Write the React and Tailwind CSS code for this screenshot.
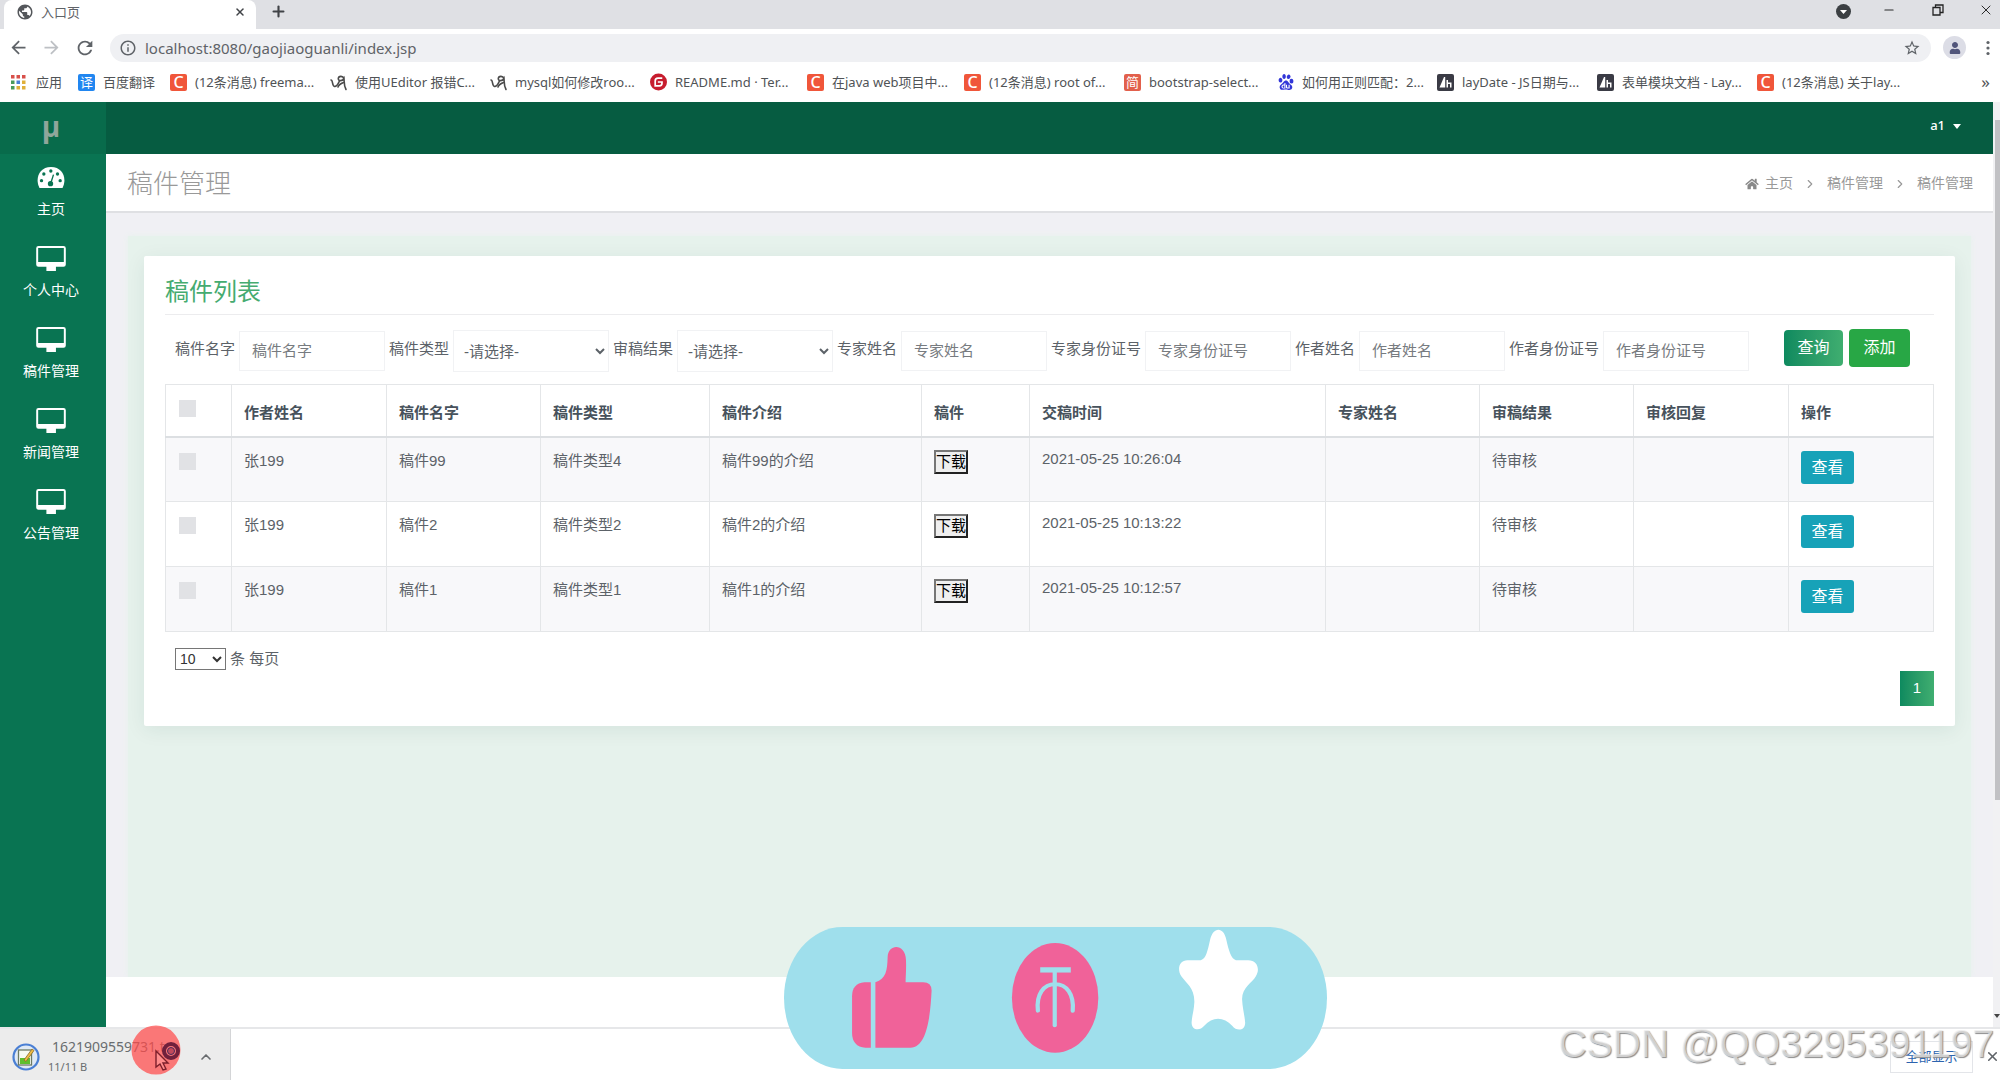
import React from "react";
import { FaHome, FaUser } from "react-icons/fa";
import { SiBaidu } from "react-icons/si";
import { MdArrowBack, MdArrowForward, MdRefresh, MdInfoOutline, MdStarBorder, MdPublic } from "react-icons/md";
import { X, Plus, Minus, ChevronUp, ChevronRight } from "lucide-react";

const columns = [
  { name: "作者姓名", width: "w-[155px]" },
  { name: "稿件名字", width: "w-[154px]" },
  { name: "稿件类型", width: "w-[169px]" },
  { name: "稿件介绍", width: "w-[212px]" },
  { name: "稿件", width: "w-[108px]" },
  { name: "交稿时间", width: "w-[296px]" },
  { name: "专家姓名", width: "w-[154px]" },
  { name: "审稿结果", width: "w-[154px]" },
  { name: "审核回复", width: "w-[155px]" },
  { name: "操作", width: "w-[145px]" },
];

const rows = [
  { author: "张199", title: "稿件99", type: "稿件类型4", intro: "稿件99的介绍", time: "2021-05-25 10:26:04" },
  { author: "张199", title: "稿件2", type: "稿件类型2", intro: "稿件2的介绍", time: "2021-05-25 10:13:22" },
  { author: "张199", title: "稿件1", type: "稿件类型1", intro: "稿件1的介绍", time: "2021-05-25 10:12:57" },
];

const filters = [
  { id: "title", label: "稿件名字" },
  { id: "type", label: "稿件类型", select: true },
  { id: "result", label: "审稿结果", select: true },
  { id: "expert", label: "专家姓名" },
  { id: "expertId", label: "专家身份证号" },
  { id: "author", label: "作者姓名" },
  { id: "authorId", label: "作者身份证号" },
];

function LetterIcon({ children, className }) {
  return (
    <span className={`flex h-[17px] w-[17px] items-center justify-center rounded-[2px] text-white ${className}`}>
      {children}
    </span>
  );
}

const CsdnIcon = () => <LetterIcon className="bg-[#f0563a] text-[16px] leading-none font-medium">C</LetterIcon>;

const ScriptIcon = () => (
  <svg viewBox="0 0 17 17" className="h-[17px] w-[17px]" fill="none" stroke="#4b4b4b" strokeWidth="1.6" strokeLinecap="round">
    <path d="M1 6c2 0 1 6 3.500 6.500C7 13 8 10 9.500 7" />
    <path d="M14 4.500C13 1.500 8.500 1.800 8.300 4.500c-.2 2.800 4.200 2.800 5.700 0 .3 4-.2 7 2 11" />
    <path d="M13.500 8.500C11 9.500 8.500 11 8 13" />
  </svg>
);

const LayIcon = () => (
  <svg viewBox="0 0 17 17" className="h-[17px] w-[17px]">
    <rect width="17" height="17" rx="2" fill="#3a3b45" />
    <path d="M2.500 13.500 7 3h1.200v10.500zM9.500 6H11v2.500h3.500v5h-1.500V10h-2v3.500H9.500z" fill="#fff" />
  </svg>
);

const GiteeIcon = () => (
  <svg viewBox="0 0 18 18" className="h-[18px] w-[18px]">
    <circle cx="9" cy="9" r="9" fill="#c71d2e" />
    <path d="M13 5H8.500A3 3 0 0 0 5.500 8v5H10a2.700 2.700 0 0 0 2.700-2.700V9H8.300" fill="none" stroke="#fff" strokeWidth="1.800" />
  </svg>
);

const bookmarks = [
  { icon: <CsdnIcon />, text: "(12条消息) freema...", width: "w-[160px]" },
  { icon: <ScriptIcon />, text: "使用UEditor 报错C...", width: "w-[160px]" },
  { icon: <ScriptIcon />, text: "mysql如何修改roo...", width: "w-[160px]" },
  { icon: <GiteeIcon />, text: "README.md · Ter...", width: "w-[157px]" },
  { icon: <CsdnIcon />, text: "在java web项目中...", width: "w-[157px]" },
  { icon: <CsdnIcon />, text: "(12条消息) root of...", width: "w-[160px]" },
  { icon: <LetterIcon className="bg-[#e2604c] text-[13px] leading-none">简</LetterIcon>, text: "bootstrap-select...", width: "w-[153px]" },
  { icon: <SiBaidu className="h-4 w-4 text-[#3236d8]" />, text: "如何用正则匹配：2...", width: "w-[160px]" },
  { icon: <LayIcon />, text: "layDate - JS日期与...", width: "w-[160px]" },
  { icon: <LayIcon />, text: "表单模块文档 - Lay...", width: "w-[160px]" },
  { icon: <CsdnIcon />, text: "(12条消息) 关于lay...", width: "w-[160px]" },
];

const appDots = ["#d8504a", "#d8504a", "#d8504a", "#4b9a5b", "#4a80d8", "#e0b03a", "#4b9a5b", "#e0b03a", "#e0b03a"];

function BrowserChrome() {
  return (
    <header className="font-['Noto_Sans','Noto_Sans_CJK_SC',sans-serif] text-[#5f6368]">
      <div className="flex h-[29px] items-stretch justify-between bg-[#dfe0e4]">
        <div className="flex items-stretch">
          <div className="ml-1 flex w-[252px] items-center rounded-t-lg bg-white pr-2.5 pb-1.5 pl-3">
            <MdPublic className="h-[18px] w-[18px] text-[#54575b]" />
            <span className="ml-[7px] flex-1 text-[13px] leading-5">入口页</span>
            <button aria-label="关闭标签页"><X className="h-3 w-3 text-[#404347]" strokeWidth={3} /></button>
          </div>
          <button aria-label="新标签页" className="ml-[14px] pb-1.5"><Plus className="h-[17px] w-[17px] text-[#404347]" strokeWidth={3} /></button>
        </div>
        <div className="flex items-center pr-1.5 pb-2.5 text-[#2b2b2b]">
          <button aria-label="标签页搜索" className="mr-[31px] pt-1">
            <svg viewBox="0 0 15 15" className="h-[15px] w-[15px]"><circle cx="7.500" cy="7.500" r="7.500" fill="#3c4043" /><path d="M4 6h7l-3.500 4z" fill="#fff" /></svg>
          </button>
          <button aria-label="最小化" className="mr-9"><Minus className="h-3.5 w-3.5" strokeWidth={2} /></button>
          <button aria-label="还原" className="mr-[34px]">
            <svg viewBox="0 0 12 12" className="h-3 w-3" fill="none" stroke="#222" strokeWidth="1.300"><path d="M1 3.500h7V11H1zM3.500 3.500V1H11v7.500H8" /></svg>
          </button>
          <button aria-label="关闭"><X className="h-4 w-4" strokeWidth={1.5} /></button>
        </div>
      </div>
      <div className="flex h-[37px] items-center bg-white pr-2.5 pl-2">
        <button aria-label="后退"><MdArrowBack className="h-[21px] w-[21px]" /></button>
        <button aria-label="前进" className="ml-3 text-[#bdc0c4]"><MdArrowForward className="h-[21px] w-[21px]" /></button>
        <button aria-label="刷新" className="ml-3"><MdRefresh className="h-[22px] w-[22px]" /></button>
        <div className="ml-3.5 flex h-7 flex-1 items-center rounded-full bg-[#eff0f3] pr-2.5 pl-[9px]">
          <MdInfoOutline className="h-[18px] w-[18px]" />
          <input aria-label="地址" defaultValue="localhost:8080/gaojiaoguanli/index.jsp" className="ml-2 flex-1 bg-transparent text-[15px] leading-6 outline-none" />
          <button aria-label="收藏"><MdStarBorder className="h-[18px] w-[18px]" /></button>
        </div>
        <button aria-label="用户" className="ml-3 flex h-[23px] w-[23px] items-center justify-center rounded-full bg-[#dcdde6] text-[#51557a]"><FaUser className="h-3 w-3" /></button>
        <button aria-label="菜单" className="ml-5">
          <svg viewBox="0 0 4 16" className="h-4 w-1" fill="#5f6368"><circle cx="2" cy="2.500" r="1.600" /><circle cx="2" cy="8" r="1.600" /><circle cx="2" cy="13.500" r="1.600" /></svg>
        </button>
      </div>
      <nav className="flex h-9 items-center bg-white pb-1 pl-[11px] text-[13px] leading-5 whitespace-nowrap text-[#505356]">
        <a href="#apps" className="flex w-[67px] items-center">
          <svg viewBox="0 0 15 15" className="h-[15px] w-[15px]">
            {appDots.map((c, i) => <rect key={i} x={(i % 3) * 5.5} y={Math.floor(i / 3) * 5.5} width="3.500" height="3.500" fill={c} />)}
          </svg>
          <span className="ml-2.5">应用</span>
        </a>
        <a href="#fanyi" className="flex w-[92px] items-center">
          <LetterIcon className="bg-[#2186f0] text-[13px] leading-none">译</LetterIcon>
          <span className="ml-2">百度翻译</span>
        </a>
        {bookmarks.map((b) => (
          <a href="#bookmark" key={b.text} className={`flex items-center ${b.width}`}>
            <span className="flex w-[17px] shrink-0 justify-center">{b.icon}</span>
            <span className="ml-2">{b.text}</span>
          </a>
        ))}
        <button aria-label="更多书签" className="mr-2.5 ml-auto text-[17px]">»</button>
      </nav>
    </header>
  );
}

const GaugeIcon = () => (
  <svg viewBox="112 204 83 63" className="h-[21px] w-7">
    <path d="M119 267C105 240 117 204 153.500 204S202 240 188 267z" fill="#fff" />
    <g fill="#097452">
      <circle cx="125" cy="245" r="5" /><circle cx="132" cy="225" r="5" /><circle cx="153" cy="216" r="5" /><circle cx="173" cy="225" r="5" /><circle cx="181" cy="245" r="5" /><circle cx="152" cy="254" r="8" />
    </g>
    <path d="m153 252 8-25" stroke="#097452" strokeWidth="4" />
  </svg>
);

const MonitorIcon = () => (
  <svg viewBox="0 0 90 76" className="h-[25px] w-[30px]">
    <path fillRule="evenodd" d="M7 0h76q7 0 7 7v49q0 7-7 7H60v13H31V63H7q-7 0-7-7V7q0-7 7-7zM6 6v43h78V6z" fill="#fff" />
  </svg>
);

const menu = ["主页", "个人中心", "稿件管理", "新闻管理", "公告管理"];

function Sidebar() {
  return (
    <aside className="w-[106px] shrink-0 bg-[#097452]">
      <div className="flex h-[52px] items-center justify-center bg-[#086b4b] pr-1 pb-1 font-['Open_Sans',sans-serif] text-[28px] font-bold text-[#8fa69b]">μ</div>
      <nav>
        {menu.map((name, i) => (
          <a href="#menu" key={name} className="flex h-[81px] flex-col items-center pt-[7px] pr-1 text-[14px] leading-5 text-white">
            <span className="flex h-[33px] items-center">{i === 0 ? <GaugeIcon /> : <MonitorIcon />}</span>
            <span className="mt-[5px]">{name}</span>
          </a>
        ))}
      </nav>
    </aside>
  );
}

function FilterBar() {
  return (
    <form className="mt-[15px] flex h-[42px] items-center gap-1 pl-2.5 whitespace-nowrap" onSubmit={(e) => e.preventDefault()}>
      {filters.map((f) => (
        <React.Fragment key={f.id}>
          <label htmlFor={f.id} className="pb-1">{f.label}</label>
          {f.select ? (
            <select id={f.id} className="h-[42px] w-[156px] border border-[#f1f2f4] bg-white px-1.5">
              <option>-请选择-</option>
            </select>
          ) : (
            <input id={f.id} placeholder={f.label} className="h-10 w-[146px] border border-[#f1f2f4] bg-white px-3 pb-0.5 placeholder:text-[#777b80]" />
          )}
        </React.Fragment>
      ))}
      <div className="ml-[31px] flex items-center gap-1.5 pb-1.5 text-[16px] text-white">
        <button className="h-9 w-[59px] rounded-[4px] bg-linear-to-r from-[#0d8a5f] to-[#3fae70]">查询</button>
        <button className="h-[38px] w-[61px] rounded-[4px] bg-[#28a745]">添加</button>
      </div>
    </form>
  );
}

const Check = ({ label }) => (
  <input type="checkbox" aria-label={label} className="ml-px block h-[17px] w-[17px] appearance-none bg-[#e1e2e5]" />
);

function ManuscriptTable() {
  return (
    <table className="mt-3 w-full table-fixed border-collapse border border-[#e4e6e8] text-left">
      <thead>
        <tr className="h-[52px] border-b-2 border-[#dcdfe2] align-top text-[#47525c]">
          <th className="w-[66px] border-x border-[#e4e6e8] px-3 pt-[15px]"><Check label="全选" /></th>
          {columns.map((c) => (
            <th key={c.name} className={`border-x border-[#e4e6e8] px-3 pt-4 leading-[23px] font-bold ${c.width}`}>{c.name}</th>
          ))}
        </tr>
      </thead>
      <tbody>
        {rows.map((r) => (
          <tr key={r.time} className="h-[65px] align-top leading-[23px] odd:bg-[#f8f8fa] [&>td]:border [&>td]:border-[#e4e6e8] [&>td]:px-3 [&>td]:pt-[11px]">
            <td><div className="pt-1"><Check label={r.title} /></div></td>
            <td>{r.author}</td>
            <td>{r.title}</td>
            <td>{r.type}</td>
            <td>{r.intro}</td>
            <td><button className="mt-px h-6 w-[34px] border-2 border-t-[#767676] border-r-[#222] border-b-[#222] border-l-[#767676] bg-[#efefef] leading-5 text-black">下载</button></td>
            <td><div className="leading-5">{r.time}</div></td>
            <td></td>
            <td>待审核</td>
            <td></td>
            <td><button className="mt-0.5 block h-[33px] w-[53px] rounded-[3px] bg-[#17a2b8] text-[16px] text-white">查看</button></td>
          </tr>
        ))}
      </tbody>
    </table>
  );
}

function ReactionBanner() {
  return (
    <svg viewBox="62 80 1420 427" preserveAspectRatio="none" className="absolute bottom-[11px] left-[784px] h-[142px] w-[543px]">
      <rect x="62" y="80" width="1420" height="427" rx="153" ry="213" fill="#9fdfec" />
      <g fill="#f06299">
        <path d="M289 246h-17q-32 4-32 42v110q0 42 35 45h14z" />
        <path d="M301 246c28-10 31-35 32-75 1-42 47-42 48 8 1 30-1 50-1 67h46q22 0 22 25c-3 70-11 172-55 172h-92z" />
        <ellipse cx="771" cy="293" rx="113" ry="165" />
      </g>
      <g fill="none" stroke="#9fdfec">
        <path d="M732 209h80" strokeWidth="16" />
        <path d="M770 212v164" strokeWidth="11" strokeLinecap="round" />
        <path d="M726 332c-5-50 15-80 45-80s50 30 46 80" strokeWidth="11" strokeLinecap="round" />
      </g>
      <path d="M1152 180c14-4 18-30 24-60 8-42 36-42 43 0 6 30 12 56 25 60h32c23 0 32 26 20 48-10 20-37 34-36 70 1 26 7 50 8 70 0 24-22 27-34 9-22-28-52-28-73 0-13 18-34 12-33-11 1-20 6-34 7-58 2-44-22-60-34-80-12-22-5-48 16-48z" fill="#fff" />
    </svg>
  );
}

function DownloadBar() {
  return (
    <footer className="flex h-[53px] items-stretch justify-between border-t-2 border-[#e6e7e9] bg-white font-['Noto_Sans','Noto_Sans_CJK_SC',sans-serif]">
      <div className="flex w-[231px] items-center border-r border-[#d4d5d7] bg-[#ececec] pt-1 pl-3 text-[#696c6f]">
        <svg viewBox="0 0 28 28" className="h-7 w-7 shrink-0">
          <circle cx="14" cy="14" r="12.500" fill="#dfe9f5" stroke="#4a7fd4" strokeWidth="2.200" />
          <rect x="6.500" y="7" width="13" height="15" fill="#f7fbf2" stroke="#6d7a63" strokeWidth="1.300" />
          <path d="M8 15h10v6H8z" fill="#5fbf2d" />
          <path d="m12 17 8-11 2 1.500-8 11z" fill="#eebd45" stroke="#8a6a2a" strokeWidth=".8" />
        </svg>
        <div className="ml-2 flex-1">
          <div className="pl-1 text-[14px] leading-5">1621909559731.t</div>
          <div className="text-[11px] leading-5">11/11 B</div>
        </div>
        <button aria-label="下载选项" className="mr-4"><ChevronUp className="h-4 w-4" strokeWidth={2.500} /></button>
      </div>
      <div className="flex items-center pt-1">
        <button className="h-8 w-[83px] border border-[#e3e5e9] text-[13px] text-[#2c63ae]">全部显示</button>
        <button aria-label="关闭下载栏" className="ml-3"><X className="h-[15px] w-[15px] text-[#5f6368]" strokeWidth={2.500} /></button>
      </div>
    </footer>
  );
}

export default function App() {
  return (
    <div className="relative flex min-h-screen flex-col overflow-hidden bg-white font-['Liberation_Sans','Noto_Sans_CJK_SC',sans-serif] text-[15px] text-[#5c6268]">
      <BrowserChrome />
      <div className="flex flex-1">
        <Sidebar />
        <main className="flex flex-1 flex-col bg-[#f0f0f4]">
          <div className="flex h-[52px] items-center justify-end bg-[#065c41] pr-8 pb-1">
            <button className="flex items-center gap-2 font-['Noto_Sans',sans-serif] text-[13px] font-medium text-white">
              a1 <svg viewBox="0 0 8 5" className="h-[5px] w-2"><path d="M0 0h8L4 5z" fill="#fff" /></svg>
            </button>
          </div>
          <div className="flex h-[59px] items-center justify-between border-b-2 border-[#dfe0e3] bg-white pr-5 pl-[21px]">
            <h1 className="pt-0.5 text-[26px] leading-9 font-light text-[#999]">稿件管理</h1>
            <nav className="flex items-center pt-0.5 text-[14px] text-[#999]">
              <FaHome className="h-3 w-3.5 text-[#888]" />
              <a href="#home" className="ml-1.5">主页</a>
              <ChevronRight className="mx-2.5 h-3.5 w-3.5" />
              <a href="#manage">稿件管理</a>
              <ChevronRight className="mx-2.5 h-3.5 w-3.5" />
              <span>稿件管理</span>
            </nav>
          </div>
          <div className="flex flex-1 flex-col px-[22px] pt-[23px]">
            <div className="flex-1 bg-[#e6f2ec] px-4 pt-5 shadow-[0_0_6px_#e6f2ec]">
              <section className="rounded-[2px] bg-white px-[21px] pt-[18px] pb-5 shadow-[0_4px_20px_rgba(0,70,60,0.08)]">
                <h2 className="border-b border-[#ececee] pb-1 text-[24px] leading-9 text-[#45ab70]">稿件列表</h2>
                <FilterBar />
                <ManuscriptTable />
                <div className="mt-4 flex items-center pl-2.5">
                  <select id="size" className="h-[22px] w-[51px] border border-[#767676] bg-white text-[14px] text-[#333]">
                    <option>10</option>
                  </select>
                  <label htmlFor="size" className="ml-1">条 每页</label>
                </div>
                <div className="flex justify-end">
                  <button className="h-[35px] w-[34px] bg-linear-to-r from-[#0d8a5f] to-[#3fae70] text-white">1</button>
                </div>
              </section>
            </div>
          </div>
          <div className="h-[50px] bg-white" />
        </main>
        <div className="flex w-2 flex-col items-end bg-[#f1f1f3] pt-[18px]">
          <div className="h-[680px] w-[5px] bg-[#c1c1c4]" />
          <svg viewBox="0 0 6 5" className="mt-auto mb-2 h-[5px] w-1.5"><path d="M0 0h6L3 4z" fill="#444" /></svg>
        </div>
      </div>
      <DownloadBar />
      <ReactionBanner />
      <svg viewBox="0 0 50 50" className="absolute bottom-[5px] left-[131px] h-[50px] w-[50px]">
        <circle cx="25" cy="25" r="24.500" fill="#ff4a4a" fillOpacity=".72" />
        <circle cx="40" cy="26" r="7" fill="none" stroke="#70203c" strokeWidth="4" />
        <circle cx="40" cy="26" r="3.500" fill="#c04a5c" stroke="#4a2a58" strokeWidth="1" />
        <path d="M25 26v16l4-3 3 6 3-1-3-6h5z" fill="#ff8c8c" stroke="#7d1f2b" strokeWidth="1.400" />
      </svg>
      <div className="pointer-events-none absolute right-1.5 bottom-3 text-[39px] leading-[48px] whitespace-nowrap text-[#eeeeee]/70 [text-shadow:1px_1px_1px_#8c8c8c]">CSDN @QQ3295391197</div>
    </div>
  );
}
